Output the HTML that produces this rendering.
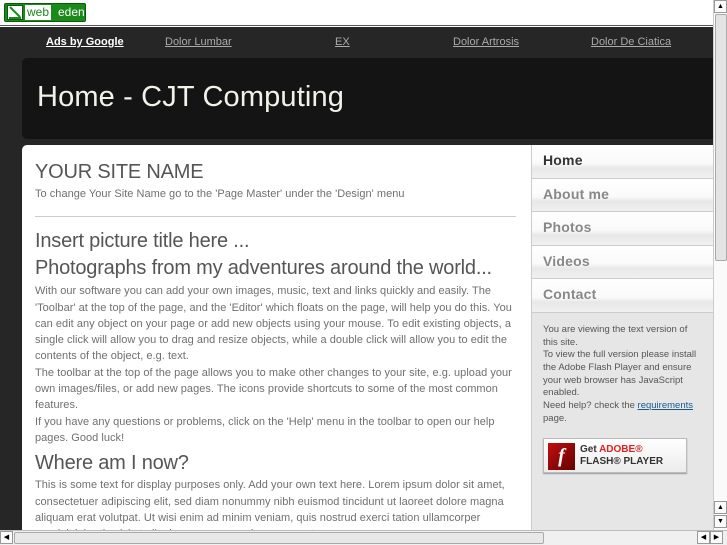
<!DOCTYPE html>
<html><head><style>
*{margin:0;padding:0;box-sizing:border-box}
body{width:727px;height:545px;overflow:hidden;background:#fff;font-family:"Liberation Sans",sans-serif;position:relative}
.top{position:absolute;left:0;top:0;width:713px;height:26px;background:#fff;border-bottom:1px solid #555}
.logo{position:absolute;left:4px;top:3px;width:82px;height:19px;background:#1a8a1a;border:1px solid #0a5a0a;border-radius:2px}
.logo .ic{position:absolute;left:2px;top:1px;width:16px;height:15px;background:#fff;border:1px solid #0a5a0a}
.logo .w{position:absolute;left:20px;top:1px;height:15px;background:#fff;color:#1a8a1a;font-size:12px;line-height:15px;padding:0 2px}
.logo .e{position:absolute;left:53px;top:1px;color:#fff;font-size:12px;line-height:15px}
.dark{position:absolute;left:0;top:27px;width:713px;height:503px;background:#262626}
.ads{position:absolute;top:36px;font-size:11px;color:#aaa;text-decoration:underline}
.hdr{position:absolute;left:22px;top:58px;width:691px;height:81px;background:#141414;border-radius:5px 0 0 5px}
.hdr h1{position:absolute;left:15px;top:23px;font-weight:normal;font-size:29px;color:#f2f2ea;letter-spacing:0.15px}
.main{position:absolute;left:22px;top:145px;width:509px;height:385px;background:#fff;border-radius:5px 0 0 0;overflow:hidden;color:#707070}
.main .in{position:absolute;left:13px;top:14px;width:484px}
h2{font-weight:normal;font-size:20px;color:#555;line-height:26px;letter-spacing:-0.2px}
p{font-size:11px;line-height:16.3px;letter-spacing:0.03px}
hr{border:0;border-top:1px solid #ccc;margin:14px 3px 11px 0}
.side{position:absolute;left:531px;top:145px;width:182px;height:385px;background:#e6e6e6;border-left:1px solid #ccc}
.nav{height:33.6px;border-bottom:1px solid #ccc;background:linear-gradient(#fff 0%,#fafafa 55%,#e8e8e8 70%,#f0f0f0 100%);font-weight:bold;font-size:14px;color:#888;padding:7px 0 0 11px;letter-spacing:0.2px}
.nav.on{color:#333}
.info{font-size:9.5px;line-height:12.7px;color:#555;padding:11px 11px 0 11px}
.info a{color:#1a5a8a}
.flash{position:absolute;left:11px;top:293px;width:144px;height:35px;background:linear-gradient(#fff,#ececec);border:1px solid #bbb;box-shadow:0 1px 1px #999}
.flash .f{position:absolute;left:4px;top:4px;width:27px;height:27px;background:linear-gradient(135deg,#c01010,#600);color:#fff;font:italic bold 20px "Liberation Serif",serif;text-align:center;line-height:27px}
.flash .t{position:absolute;left:36px;top:5px;font-size:10px;font-weight:bold;color:#333;line-height:12px}
.vs{position:absolute;left:713px;top:0;width:14px;height:530px;background:#fafafa;border-left:1px solid #ccc}
.thumb{position:absolute;left:1px;top:14px;width:12px;height:247px;background:#e4e4e4;border:1px solid #aaa;border-radius:2px}
.hs{position:absolute;left:0;top:530px;width:727px;height:15px;background:#f0f0f0;border-top:1px solid #bbb}
.hthumb{position:absolute;left:14px;top:1px;width:530px;height:12px;background:#e8e8e8;border:1px solid #aaa;border-radius:2px}
.arr{position:absolute;width:13px;height:13px;background:#fafafa;border:1px solid #999;font-size:7px;line-height:11px;text-align:center;color:#000}
</style></head><body>
<div class="top"><div class="logo"><div class="ic"><svg width="14" height="13"><path d="M2 1 L12 11 M1 12 H13" stroke="#1a8a1a" stroke-width="2"/></svg></div><div class="w">web</div><div class="e">eden</div></div></div>
<div class="dark"></div>
<span class="ads" style="left:46px;color:#fff;font-weight:bold">Ads by Google</span>
<span class="ads" style="left:165px">Dolor Lumbar</span>
<span class="ads" style="left:335px">EX</span>
<span class="ads" style="left:453px">Dolor Artrosis</span>
<span class="ads" style="left:591px">Dolor De Ciatica</span>
<div class="hdr"><h1>Home - CJT Computing</h1></div>
<div class="main"><div class="in">
<h2>YOUR SITE NAME</h2>
<p style="margin-top:1px">To change Your Site Name go to the 'Page Master' under the 'Design' menu</p>
<hr>
<h2>Insert picture title here ...</h2>
<h2 style="margin-top:1px">Photographs from my adventures around the world...</h2>
<p style="margin-top:2px">With our software you can add your own images, music, text and links quickly and easily. The 'Toolbar' at the top of the page, and the 'Editor' which floats on the page, will help you do this. You can edit any object on your page or add new objects using your mouse. To edit existing objects, a single click will allow you to drag and resize objects, while a double click will allow you to edit the contents of the object, e.g. text.<br>The toolbar at the top of the page allows you to make other changes to your site, e.g. upload your own images/files, or add new pages. The icons provide shortcuts to some of the most common features.<br>If you have any questions or problems, click on the 'Help' menu in the toolbar to open our help pages. Good luck!</p>
<h2 style="margin-top:4px">Where am I now?</h2>
<p style="margin-top:1px">This is some text for display purposes only. Add your own text here. Lorem ipsum dolor sit amet, consectetuer adipiscing elit, sed diam nonummy nibh euismod tincidunt ut laoreet dolore magna aliquam erat volutpat. Ut wisi enim ad minim veniam, quis nostrud exerci tation ullamcorper<br>suscipit lobortis nisl ut aliquip ex ea commodo consequat.</p>
</div></div>
<div class="side">
<div class="nav on">Home</div><div class="nav">About me</div><div class="nav">Photos</div><div class="nav">Videos</div><div class="nav">Contact</div>
<div class="info">You are viewing the text version of this site.<br>To view the full version please install the Adobe Flash Player and ensure your web browser has JavaScript enabled.<br>Need help? check the <a href="#">requirements</a> page.</div>
<div class="flash"><div class="f">f</div><div class="t">Get <span style="color:#e02020">ADOBE®</span><br>FLASH® PLAYER</div></div>
</div>
<div class="vs"><div class="arr" style="left:0;top:0">▲</div><div class="thumb"></div><div class="arr" style="left:0;top:501px">▲</div><div class="arr" style="left:0;top:515px">▼</div></div>
<div class="hs"><div class="arr" style="left:0;top:0">◀</div><div class="hthumb"></div><div class="arr" style="left:697px;top:0">◀</div><div class="arr" style="left:710px;top:0">▶</div></div>
</body></html>
